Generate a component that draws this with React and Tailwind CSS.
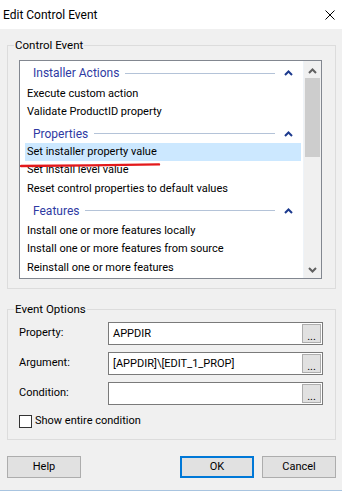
import { Fragment } from "react"

const font = "font-['Roboto','Liberation_Sans',sans-serif]"

const groups = [
  { title: "Installer Actions", space: "mt-[3px] mb-[3px]", items: ["Execute custom action", "Validate ProductID property"] },
  {
    title: "Properties",
    space: "mt-[3px] mb-[0px]",
    items: ["Set installer property value", "Set install level value", "Reset control properties to default values"],
  },
  {
    title: "Features",
    space: "mt-[4px] mb-[2px]",
    items: [
      "Install one or more features locally",
      "Install one or more features from source",
      "Reinstall one or more features",
    ],
  },
]

function ChevronUp({ className }) {
  return (
    <svg width="9" height="6" viewBox="0 0 9 6" className={className}>
      <polyline points="1,5 4.5,1.5 8,5" fill="none" stroke="currentColor" strokeWidth="2" />
    </svg>
  )
}

function ChevronDown({ className }) {
  return (
    <svg width="9" height="6" viewBox="0 0 9 6" className={className}>
      <polyline points="1,1 4.5,4.5 8,1" fill="none" stroke="currentColor" strokeWidth="2" />
    </svg>
  )
}

function GroupHeader({ title, space }) {
  return (
    <div className={`flex items-center h-[18px] pl-[13px] pr-[10px] ${space}`}>
      <span className="text-[#2e3aa3] text-[12px] leading-[18px]">{title}</span>
      <div className="flex-1 h-px bg-[#b4c3d8] ml-[6px] mr-[9px]" />
      <ChevronUp className="text-[#1c3a8e]" />
    </div>
  )
}

function OptionRow({ label, value }) {
  return (
    <div className="flex items-center h-[23px]">
      <div className="w-[89px]">{label}</div>
      <div className="flex w-[215px] h-[23px] border border-[#7a7a7a] bg-white p-px">
        <div className="flex-1 pl-[3px] leading-[19px] whitespace-pre">{value}</div>
        <div className="w-[19px] h-[19px] bg-[#e1e1e1] border border-[#adadad] flex items-end justify-center pb-[1px] text-[11px] leading-[8px]">
          ...
        </div>
      </div>
    </div>
  )
}

export default function App() {
  return (
    <div className={`${font} text-[11px] text-black w-[342px] h-[491px] flex flex-col bg-[#f0f0f0]`}>
      {/* Title bar */}
      <div className="h-[29px] bg-white flex items-center justify-between pl-[3px] pr-[7px]">
        <span className="text-[12px]">Edit Control Event</span>
        <svg width="10" height="10" viewBox="0 0 10 10">
          <path d="M0.5 0.5 L9.5 9.5 M9.5 0.5 L0.5 9.5" stroke="#000" strokeWidth="1" />
        </svg>
      </div>

      <div className="flex-1 flex flex-col pl-[7px] pr-[6px]">
        {/* Control Event group */}
        <div className="mt-[16px] border border-[#dcdcdc] pb-[9px]">
          <div className="-mt-[8px] ml-[6px] px-[1px] w-fit bg-[#f0f0f0] leading-[15px] text-[11.5px]">Control Event</div>
          <div className="ml-[11px] mt-[7px] w-[303px] h-[219px] border border-[#828790] bg-white flex">
            <div className="flex-1 relative">
              {groups.map((g) => (
                <Fragment key={g.title}>
                  <GroupHeader title={g.title} space={g.space} />
                  {g.items.map((it) => (
                    <div
                      key={it}
                      className={`h-[18.4px] leading-[18px] ml-[5px] mr-[2px] pl-[2px] ${
                        it === "Set installer property value" ? "bg-[#cce8ff]" : ""
                      }`}
                    >
                      {it}
                    </div>
                  ))}
                </Fragment>
              ))}
              <svg
                className="absolute left-0 top-[101px]"
                width="142"
                height="6"
                viewBox="0 0 142 6"
              >
                <path d="M1 4 C 40 3.6, 100 3.2, 139 2.4" fill="none" stroke="#e3191b" strokeWidth="2.4" strokeLinecap="round" />
              </svg>
            </div>
            {/* Scrollbar */}
            <div className="w-[18px] border-l border-[#eef3f8] bg-[#f0f0f0] flex flex-col">
              <div className="h-[17px] flex items-center justify-center pt-[2px]">
                <ChevronUp className="text-[#606060]" />
              </div>
              <div className="mx-[1px] h-[79px] bg-[#cdcdcd]" />
              <div className="flex-1" />
              <div className="h-[17px] flex items-center justify-center">
                <ChevronDown className="text-[#606060]" />
              </div>
            </div>
          </div>
        </div>

        {/* Event Options group */}
        <div className="mt-[20px] border border-[#dcdcdc] pb-[11px]">
          <div className="-mt-[8px] ml-[6px] px-[1px] w-fit bg-[#f0f0f0] leading-[15px] text-[11.5px]">Event Options</div>
          <div className="ml-[11px] mt-[5px] flex flex-col gap-[7px]">
            <OptionRow label="Property:" value="APPDIR" />
            <OptionRow label="Argument:" value="[APPDIR]\[EDIT_1_PROP]" />
            <OptionRow label="Condition:" value="" />
          </div>
          <label className="ml-[11px] mt-[10px] flex items-center h-[13px]">
            <span className="w-[13px] h-[13px] border border-[#333333] bg-white" />
            <span className="ml-[3px]">Show entire condition</span>
          </label>
        </div>

        {/* Buttons */}
        <div className="mt-[16px] flex items-center justify-between">
          <button className="w-[74px] h-[22px] bg-[#e1e1e1] border border-[#adadad]">Help</button>
          <div className="flex gap-[8px]">
            <button className="w-[74px] h-[22px] bg-[#e1e1e1] border-2 border-[#0078d7]">OK</button>
            <button className="w-[74px] h-[22px] bg-[#e1e1e1] border border-[#adadad]">Cancel</button>
          </div>
        </div>
      </div>
      <div className="h-px bg-[#a8c4e0]" />
    </div>
  )
}
